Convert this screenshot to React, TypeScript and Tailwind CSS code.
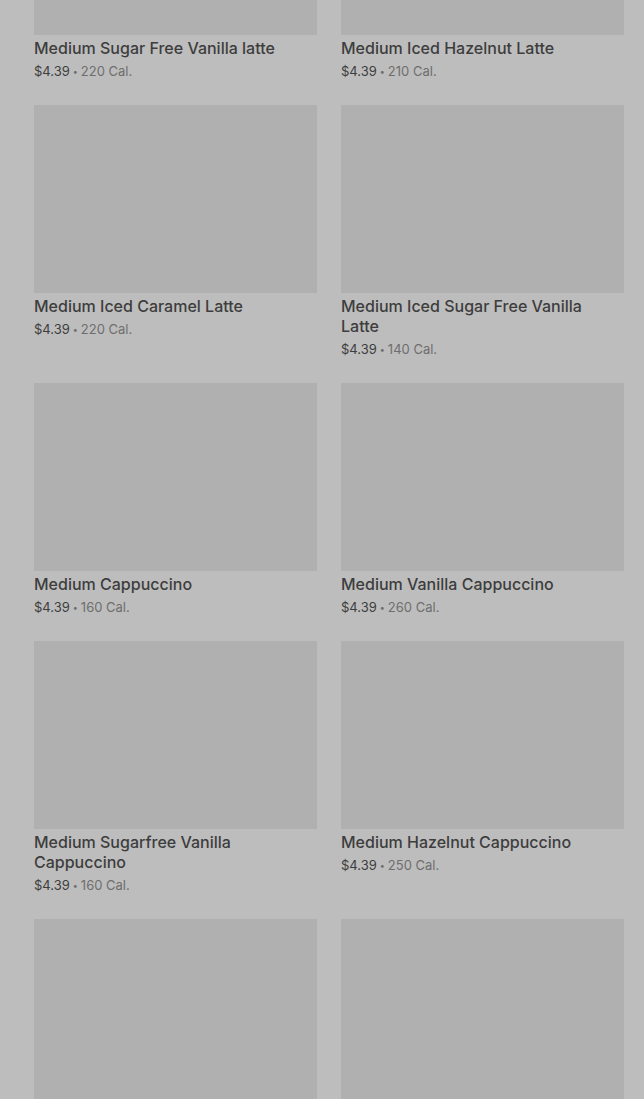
import React from 'react';

const items = [
  { name: 'Medium Sugar Free Vanilla latte', price: '$4.39', cal: '220 Cal.' },
  { name: 'Medium Iced Hazelnut Latte', price: '$4.39', cal: '210 Cal.' },
  { name: 'Medium Iced Caramel Latte', price: '$4.39', cal: '220 Cal.' },
  { name: 'Medium Iced Sugar Free Vanilla Latte', price: '$4.39', cal: '140 Cal.' },
  { name: 'Medium Cappuccino', price: '$4.39', cal: '160 Cal.' },
  { name: 'Medium Vanilla Cappuccino', price: '$4.39', cal: '260 Cal.' },
  { name: 'Medium Sugarfree Vanilla Cappuccino', price: '$4.39', cal: '160 Cal.' },
  { name: 'Medium Hazelnut Cappuccino', price: '$4.39', cal: '250 Cal.' },
];

const MenuCard = ({ item }: { item: (typeof items)[number] }) => (
  <div className="flex flex-col">
    <div className="h-[188px] w-full bg-[#b0b0b0]" />
    <div className="mt-[3px] pr-2 text-[16px] leading-[20px] font-medium text-[#3d3d3d]">{item.name}</div>
    <div className="mt-[3px] h-[20px] text-[13px] leading-[20px] text-[#6e6e6e]">
      <span className="text-[#3d3d3d]">{item.price}</span>
      <span className="mx-[3px] text-[9px] leading-none align-[1px]">•</span>
      {item.cal}
    </div>
  </div>
);

export default function App() {
  return (
    <div
      className="h-[1099px] w-full overflow-hidden bg-[#bdbdbd]"
      style={{ fontFamily: 'Inter, "Noto Sans", sans-serif' }}
    >
      {/* scrolled menu list behind the overlay */}
      <div className="-mt-[153px] grid grid-cols-2 gap-x-6 gap-y-6 pl-[34px] pr-[20px]">
        {items.map((item) => (
          <MenuCard key={item.name} item={item} />
        ))}
        {/* next row, only the photos are in view */}
        <div className="h-[188px] bg-[#b0b0b0]" />
        <div className="h-[188px] bg-[#b0b0b0]" />
      </div>
    </div>
  );
}
